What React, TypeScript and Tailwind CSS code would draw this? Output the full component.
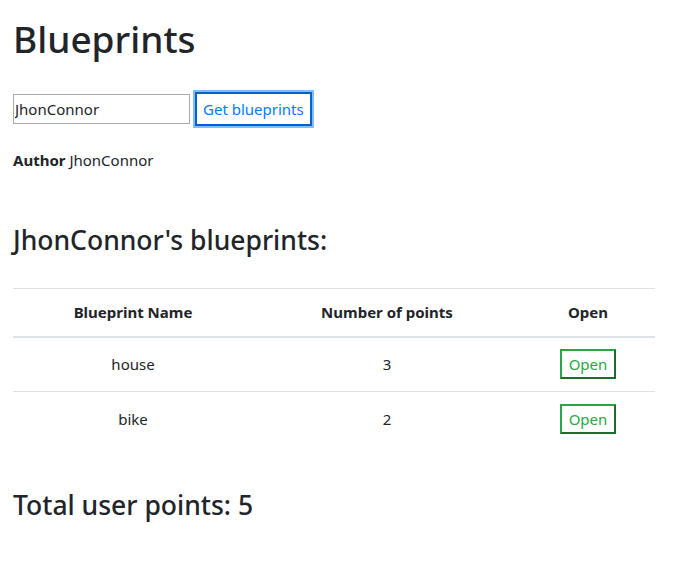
import React from "react";

const ROWS = [
  { name: "house", points: 3 },
  { name: "bike", points: 2 },
];

export default function App() {
  const total = ROWS.reduce((s, r) => s + r.points, 0);
  return (
    <div
      className="min-h-screen bg-white px-[13px] pt-[16px] text-[#212529]"
      style={{ fontFamily: '"Noto Sans", "Open Sans", sans-serif' }}
    >
      <h1 className="text-[37px] leading-[46px] font-medium mb-[29px]">Blueprints</h1>

      <div className="flex items-center gap-[5px] h-[36px]">
        <input
          defaultValue="JhonConnor"
          className="w-[177px] h-[30px] border border-[#a9a9a9] px-[1px] text-[15px] outline-none"
        />
        <button className="h-[34px] px-[6px] text-[15px] text-[#007bff] bg-white border-2 border-[#0062cc] ring-[2px] ring-[#80bdff]">
          Get blueprints
        </button>
      </div>

      <p className="mt-[22px] text-[15px] leading-[22px]">
        <b className="font-bold">Author</b> JhonConnor
      </p>

      <h3 className="mt-[52px] text-[26.5px] leading-[34px] font-medium">JhonConnor's blueprints:</h3>

      <table className="mt-[31px] w-[642px] text-[15px] border-collapse">
        <thead>
          <tr className="border-t border-[#dee2e6]">
            <th className="w-[240px] h-[48px] font-bold border-b-2 border-[#dee2e6]">Blueprint Name</th>
            <th className="w-[268px] font-bold border-b-2 border-[#dee2e6]">Number of points</th>
            <th className="font-bold border-b-2 border-[#dee2e6]">Open</th>
          </tr>
        </thead>
        <tbody>
          {ROWS.map((r) => (
            <tr key={r.name} className="border-b border-[#dee2e6] last:border-b-0">
              <td className="text-center h-[55px]">{r.name}</td>
              <td className="text-center">{r.points}</td>
              <td className="text-center">
                <button className="h-[30px] px-[7px] text-[15px] text-[#28a745] bg-white border-2 border-t-[#28a745] border-l-[#28a745] border-r-[#1c6b31] border-b-[#1c6b31]">
                  Open
                </button>
              </td>
            </tr>
          ))}
        </tbody>
      </table>

      <h3 className="mt-[41px] text-[26.5px] leading-[34px] font-medium">Total user points: {total}</h3>
    </div>
  );
}
